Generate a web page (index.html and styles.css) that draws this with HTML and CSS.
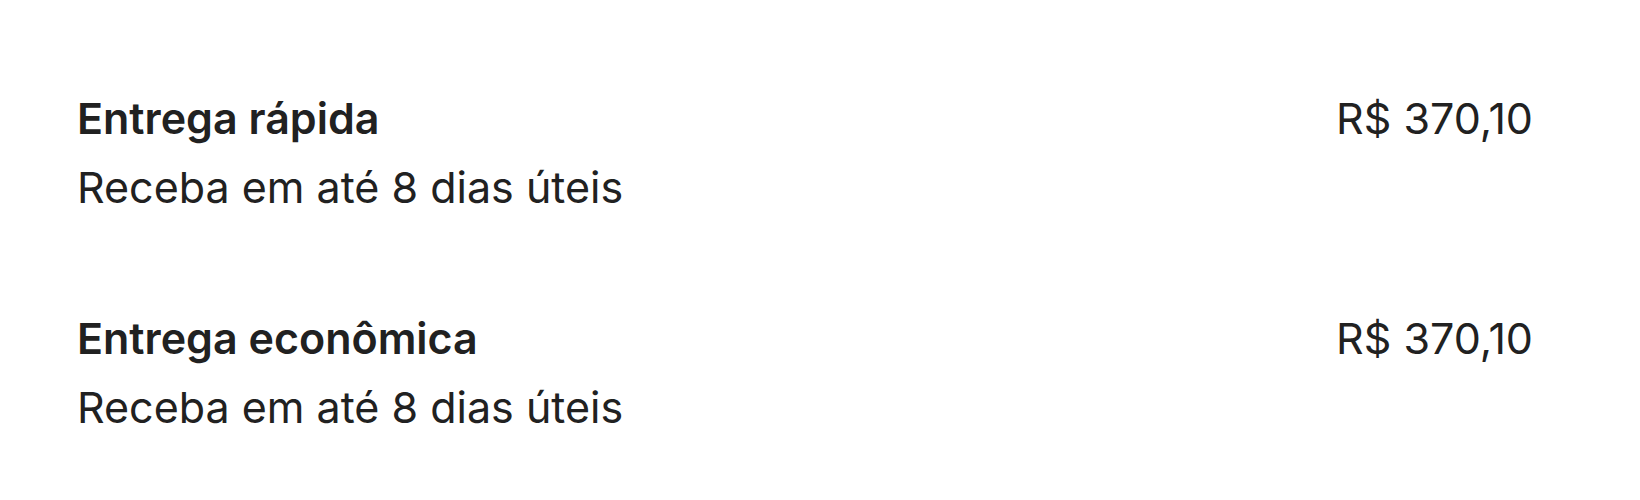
FILE: index.html
```html
<!DOCTYPE html>
<html lang="pt-BR">
<head>
<meta charset="utf-8">
<title>Opções de entrega</title>
<link rel="stylesheet" href="styles.css">
</head>
<body>
<main class="shipping">
  <div class="option">
    <div class="option-info">
      <div class="option-title">Entrega rápida</div>
      <div class="option-desc">Receba em até 8 dias úteis</div>
    </div>
    <div class="option-price">R$ 370,10</div>
  </div>
  <div class="option">
    <div class="option-info">
      <div class="option-title">Entrega econômica</div>
      <div class="option-desc">Receba em até 8 dias úteis</div>
    </div>
    <div class="option-price">R$ 370,10</div>
  </div>
</main>
</body>
</html>
```

FILE: styles.css
```css
html, body {
  margin: 0;
  padding: 0;
  background: #ffffff;
}

body {
  font-family: Inter, "Noto Sans", sans-serif;
  color: #212121;
}

.shipping {
  padding: 42px 107px 0 77px;
  display: flex;
  flex-direction: column;
}

.option {
  display: flex;
  justify-content: space-between;
  align-items: flex-start;
  padding: 46px 0 45px;
}

.option-info {
  display: flex;
  flex-direction: column;
  gap: 9px;
}

.option-title {
  font-size: 43px;
  line-height: 60px;
  font-weight: 600;
}

.option-desc {
  font-size: 43px;
  line-height: 60px;
  font-weight: 400;
}

.option-price {
  font-size: 43px;
  line-height: 60px;
  font-weight: 400;
}
```
